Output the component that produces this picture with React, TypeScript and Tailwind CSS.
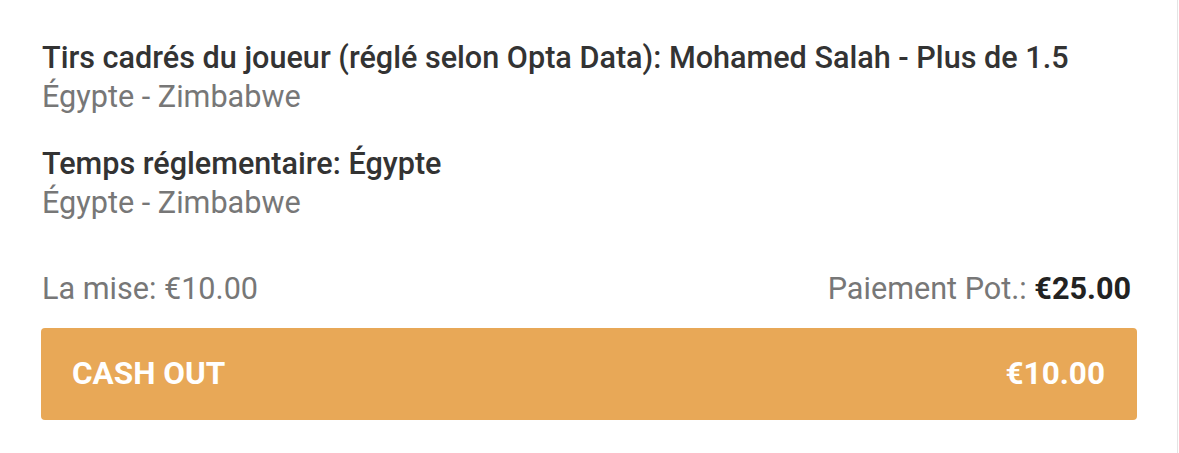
import React from "react";

export default function App() {
  return (
    <div className="w-[1179px] h-[453px] bg-white" style={{ fontFamily: "Roboto, 'Noto Sans', sans-serif" }}>
      <div className="w-[1178px] h-[453px] border-r border-[#e4e4e4] pl-[41px] pr-[40px] pt-[38px]">
        <div className="flex flex-col gap-[28px]">
          <div className="leading-[39px] text-[30.6px]">
            <div className="font-medium text-[#333333] pl-px">
              Tirs cadrés du joueur (réglé selon Opta Data): Mohamed Salah - Plus de 1.5
            </div>
            <div className="text-[#777777] pl-px">Égypte - Zimbabwe</div>
          </div>
          <div className="leading-[39px] text-[30.6px]">
            <div className="font-medium text-[#333333] pl-px">Temps réglementaire: Égypte</div>
            <div className="text-[#777777] pl-px">Égypte - Zimbabwe</div>
          </div>
        </div>
        <div className="mt-[47px] flex justify-between items-center text-[30.6px] leading-[39px] pl-px pr-[6px]">
          <span className="text-[#777777]">La mise: €10.00</span>
          <span className="text-[#777777]">
            Paiement Pot.: <span className="font-bold text-[#222222]">€25.00</span>
          </span>
        </div>
        <div className="mt-[20px] h-[92px] rounded-[4px] bg-[#e8a857] flex items-center justify-between pl-[31px] pr-[32px] text-white font-bold text-[31.5px]">
          <span>CASH OUT</span>
          <span>€10.00</span>
        </div>
      </div>
    </div>
  );
}
